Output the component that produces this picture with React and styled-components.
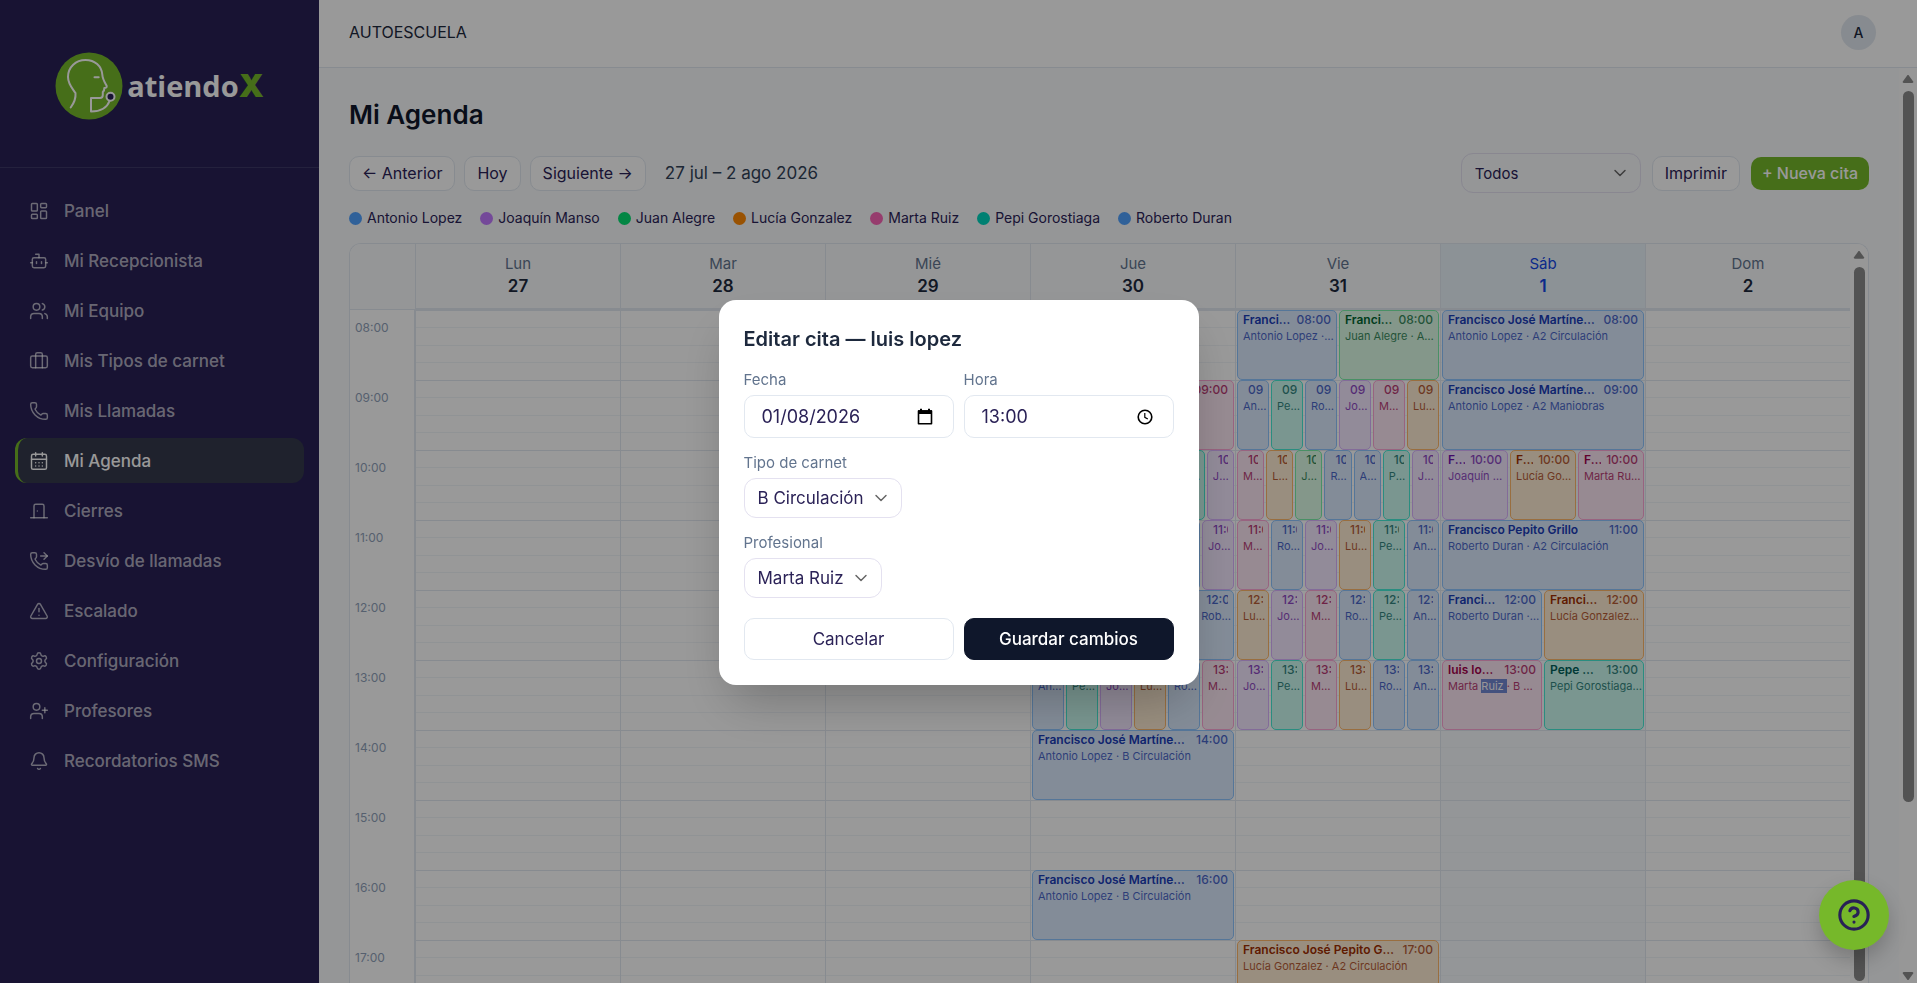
import React, { useState } from "react";
import styled, { createGlobalStyle, css } from "styled-components";
import {
  LayoutDashboard,
  Bot,
  Users,
  Briefcase,
  Phone,
  CalendarDays,
  DoorClosed,
  PhoneForwarded,
  TriangleAlert,
  Settings,
  UserPlus,
  Bell,
  ChevronDown,
} from "lucide-react";

// --- GLOBAL STYLES ---
const GlobalStyle = createGlobalStyle`
  * {
    box-sizing: border-box;
  }

  body {
    margin: 0;
    font-family: 'Inter', 'Liberation Sans', sans-serif;
    font-size: 16px;
    color: #2b2257;
    background-color: #f8fafc;
  }

  button, input, select {
    font-family: inherit;
    color: inherit;
  }
`;

// --- THEME ---
const theme = {
  navy: "#282156",
  green: "#76b82a",
  slate50: "#f8fafc",
  slate100: "#f1f5f9",
  slate200: "#e2e8f0",
  slate400: "#90a1b9",
  slate500: "#62748e",
  slate800: "#1d293d",
  slate900: "#0f172b",
  lilac: "#e4e1f0",
};

const palette = {
  blue: { bg: "#dbeafe", border: "#8ec5ff", text: "#193cb8", dot: "#51a2ff" },
  purple: { bg: "#f3e8ff", border: "#dab2ff", text: "#6e11b0", dot: "#c27aff" },
  green: { bg: "#dcfce7", border: "#7bf1a8", text: "#016630", dot: "#05df72" },
  orange: { bg: "#ffedd4", border: "#ffb86a", text: "#9f2d00", dot: "#ff8904" },
  pink: { bg: "#fce7f3", border: "#fda5d5", text: "#a3004c", dot: "#fb64b6" },
  teal: { bg: "#cbfbf1", border: "#46ecd5", text: "#005f5a", dot: "#00d5be" },
};

// --- DATA ---
const navItems = [
  { label: "Panel", icon: LayoutDashboard },
  { label: "Mi Recepcionista", icon: Bot },
  { label: "Mi Equipo", icon: Users },
  { label: "Mis Tipos de carnet", icon: Briefcase },
  { label: "Mis Llamadas", icon: Phone },
  { label: "Mi Agenda", icon: CalendarDays, active: true },
  { label: "Cierres", icon: DoorClosed },
  { label: "Desvío de llamadas", icon: PhoneForwarded },
  { label: "Escalado", icon: TriangleAlert },
  { label: "Configuración", icon: Settings },
  { label: "Profesores", icon: UserPlus },
  { label: "Recordatorios SMS", icon: Bell },
];

const staff = {
  antonio: { name: "Antonio Lopez", color: "blue" },
  joaquin: { name: "Joaquín Manso", color: "purple" },
  juan: { name: "Juan Alegre", color: "green" },
  lucia: { name: "Lucía Gonzalez", color: "orange" },
  marta: { name: "Marta Ruiz", color: "pink" },
  pepi: { name: "Pepi Gorostiaga", color: "teal" },
  roberto: { name: "Roberto Duran", color: "blue" },
};

const hours = [8, 9, 10, 11, 12, 13, 14, 15, 16, 17];

const longName = "Francisco José Martínez Pérez";

const ev = (who, type = "A2 Circulación", client = longName) => ({ who, type, client });

const days = [
  { name: "Lun", date: "27", events: {} },
  { name: "Mar", date: "28", events: {} },
  { name: "Mié", date: "29", events: {} },
  {
    name: "Jue",
    date: "30",
    events: {
      9: [ev("marta")],
      10: [ev("marta"), ev("lucia"), ev("juan"), ev("roberto"), ev("antonio"), ev("pepi"), ev("joaquin")],
      11: [ev("marta"), ev("lucia"), ev("pepi"), ev("antonio"), ev("roberto"), ev("joaquin")],
      12: [ev("marta"), ev("lucia"), ev("pepi"), ev("antonio"), ev("roberto")],
      13: [ev("antonio"), ev("pepi"), ev("joaquin"), ev("lucia"), ev("roberto"), ev("marta")],
      14: [ev("antonio", "B Circulación")],
      16: [ev("antonio", "B Circulación")],
    },
  },
  {
    name: "Vie",
    date: "31",
    events: {
      8: [ev("antonio"), ev("juan")],
      9: [ev("antonio"), ev("pepi"), ev("roberto"), ev("joaquin"), ev("marta"), ev("lucia")],
      10: [ev("marta"), ev("lucia"), ev("juan"), ev("roberto"), ev("antonio"), ev("pepi"), ev("joaquin")],
      11: [ev("marta"), ev("roberto"), ev("joaquin"), ev("lucia"), ev("pepi"), ev("antonio")],
      12: [ev("lucia"), ev("joaquin"), ev("marta"), ev("roberto"), ev("pepi"), ev("antonio")],
      13: [ev("joaquin"), ev("pepi"), ev("marta"), ev("lucia"), ev("roberto"), ev("antonio")],
      17: [ev("lucia", "A2 Circulación", "Francisco José Pepito Grillo")],
    },
  },
  {
    name: "Sáb",
    date: "1",
    today: true,
    events: {
      8: [ev("antonio")],
      9: [ev("antonio", "A2 Maniobras")],
      10: [ev("joaquin"), ev("lucia"), ev("marta")],
      11: [ev("roberto", "A2 Circulación", "Francisco Pepito Grillo")],
      12: [ev("roberto"), ev("lucia")],
      13: [
        { ...ev("marta", "B Circulación", "luis lopez"), selected: true },
        ev("pepi", "B Circulación", "Pepe Rodriguez"),
      ],
    },
  },
  { name: "Dom", date: "2", events: {} },
];

const formatHour = (h) => `${String(h).padStart(2, "0")}:00`;

// --- Layout ---
const Shell = styled.div`
  display: flex;
  height: 100vh;
  overflow: hidden;
`;

const Main = styled.div`
  flex: 1;
  min-width: 0;
  display: flex;
  flex-direction: column;
`;

const ScrollArea = styled.div`
  flex: 1;
  min-height: 0;
  display: flex;
`;

const Content = styled.main`
  flex: 1;
  min-width: 0;
  padding: 30px 30px 0;
  overflow: hidden;
  display: flex;
  flex-direction: column;
`;

// --- Sidebar ---
const Sidebar = styled.aside`
  width: 319px;
  flex-shrink: 0;
  background-color: ${theme.navy};
`;

const Brand = styled.a`
  height: 168px;
  padding-top: 4px;
  display: flex;
  align-items: center;
  justify-content: center;
  gap: 4px;
  border-bottom: 1px solid rgba(255, 255, 255, 0.1);
  text-decoration: none;
`;

const BrandName = styled.span`
  display: flex;
  align-items: baseline;
  font-family: 'Open Sans', 'Noto Sans', sans-serif;
  font-size: 29px;
  font-weight: 700;
  line-height: 40px;
  color: #ffffff;

  b {
    font-family: 'Inter', sans-serif;
    font-size: 32px;
    font-weight: 900;
    color: ${theme.green};
  }
`;

const Nav = styled.nav`
  display: flex;
  flex-direction: column;
  gap: 5px;
  padding: 20px 15px;
`;

const NavLink = styled.a`
  display: flex;
  align-items: center;
  gap: 15px;
  height: 45px;
  padding: 0 11px;
  border-left: 3px solid transparent;
  border-radius: 12px;
  font-size: 17px;
  font-weight: 500;
  color: rgba(255, 255, 255, 0.65);
  text-decoration: none;

  ${({ $active }) => $active && css`
    background-color: #35394b;
    border-left-color: ${theme.green};
    color: #ffffff;
  `}
`;

// --- Top bar ---
const TopBar = styled.header`
  height: 68px;
  flex-shrink: 0;
  display: flex;
  align-items: center;
  justify-content: space-between;
  padding: 0 41px 3px 30px;
  background-color: #ffffff;
  border-bottom: 1px solid ${theme.slate200};
  color: ${theme.slate800};
`;

const Avatar = styled.div`
  width: 35px;
  height: 35px;
  border-radius: 50%;
  background-color: ${theme.slate200};
  display: flex;
  align-items: center;
  justify-content: center;
  font-size: 14px;
  font-weight: 500;
`;

// --- Toolbar ---
const PageTitle = styled.h1`
  margin: 0 0 21px;
  font-size: 26px;
  line-height: 34px;
  font-weight: 600;
  color: ${theme.slate900};
`;

const Toolbar = styled.div`
  display: flex;
  align-items: center;
  gap: 9px;
  height: 40px;
  flex-shrink: 0;
`;

const ToolButton = styled.button`
  height: 35px;
  padding: 0 12px;
  border: 1px solid ${theme.slate200};
  border-radius: 10px;
  background-color: #ffffff;
  font-size: 16px;
  white-space: nowrap;
`;

const PrimaryButton = styled(ToolButton)`
  height: 33px;
  padding: 0 11px;
  border: none;
  background-color: ${theme.green};
  color: #ffffff;
  font-weight: 500;
`;

const WeekRange = styled.span`
  margin-left: 10px;
  font-size: 17px;
  color: #314158;
`;

const ToolbarEnd = styled.div`
  display: flex;
  align-items: center;
  gap: 11px;
  margin-left: auto;
`;

const SelectWrap = styled.div`
  position: relative;
  width: ${({ $width }) => $width || "fit-content"};

  svg {
    position: absolute;
    right: 11px;
    top: 10px;
    pointer-events: none;
    color: #666666;
  }
`;

const Select = styled.select`
  appearance: none;
  field-sizing: content;
  width: ${({ $full }) => ($full ? "100%" : "auto")};
  height: 40px;
  padding: 0 37px 0 13px;
  border: 1px solid ${theme.lilac};
  border-radius: 12px;
  background-color: transparent;
  font-size: ${({ $full }) => ($full ? "15px" : "17px")};
  display: block;
`;

const Legend = styled.ul`
  display: flex;
  gap: 18px;
  margin: 15px 0;
  padding: 0;
  list-style: none;
`;

const LegendItem = styled.li`
  display: flex;
  align-items: center;
  gap: 5px;
  font-size: 14px;
  line-height: 20px;

  &::before {
    content: '';
    width: 13px;
    height: 13px;
    border-radius: 50%;
    background-color: ${({ $color }) => palette[$color].dot};
  }
`;

// --- Calendar ---
const Calendar = styled.section`
  flex: 1;
  min-height: 0;
  display: flex;
  overflow: hidden;
  border: 1px solid ${theme.slate200};
  border-bottom: none;
  border-radius: 12px 12px 0 0;
  background-color: #ffffff;
`;

const Week = styled.div`
  flex: 1;
  min-width: 0;
  display: grid;
  grid-template-columns: 65px repeat(7, minmax(0, 1fr));
  grid-template-rows: 66px auto;
  overflow: hidden;
`;

const DayHead = styled.div`
  padding-top: 9px;
  border-left: 1px solid ${theme.slate200};
  border-bottom: 2px solid ${theme.slate200};
  background-color: ${({ $today }) => ($today ? "#e9f4fb" : theme.slate50)};
  color: ${({ $today }) => ($today ? "#1447e6" : theme.slate500)};
  text-align: center;
  font-size: 15px;
  line-height: 22px;

  strong {
    display: block;
    font-size: 17px;
    font-weight: 600;
    color: ${({ $today }) => ($today ? "#1447e6" : theme.slate800)};
  }
`;

const Corner = styled.div`
  border-bottom: 1px solid ${theme.slate200};
  background-color: ${theme.slate50};
`;

const HourColumn = styled.div`
  border-right: 1px solid ${theme.slate200};
`;

const HourLabel = styled.div`
  height: 70px;
  padding: 8px 5px;
  font-size: 12px;
  line-height: 20px;
  color: ${theme.slate400};
`;

const DayColumn = styled.div`
  border-left: 1px solid ${theme.slate200};
  background-color: ${({ $today }) => ($today ? "#f7fafe" : "#ffffff")};
`;

const line = (color, y) => `linear-gradient(${color}, ${color}) 0 ${y}px / 100% 1px no-repeat`;

const HourCell = styled.div`
  height: 70px;
  display: flex;
  gap: 2px;
  padding: 0 1px;
  background:
    ${line(theme.slate200, 0)},
    ${line(theme.slate100, 17)},
    ${line(theme.slate100, 35)},
    ${line(theme.slate100, 52)};
`;

const EventCard = styled.article`
  flex: 1;
  min-width: 0;
  padding: 1px 1px 1px 5px;
  border: 1px solid ${({ $color }) => palette[$color].border};
  border-radius: 5px;
  background-color: ${({ $color }) => palette[$color].bg};
  color: ${({ $color }) => palette[$color].text};
  overflow: hidden;
`;

const EventHead = styled.div`
  display: flex;
  justify-content: space-between;
  gap: 5px;
  margin-right: 4px;
  overflow: hidden;
  font-size: 12px;
  line-height: 16px;
`;

const EventClient = styled.strong`
  min-width: 0;
  overflow: hidden;
  text-overflow: ellipsis;
  white-space: nowrap;
  font-weight: 600;
`;

const EventTime = styled.time`
  flex-shrink: 0;
  font-weight: 500;
  opacity: 0.75;
`;

const EventMeta = styled.div`
  overflow: hidden;
  text-overflow: ellipsis;
  white-space: nowrap;
  font-size: 11px;
  line-height: 16px;
  opacity: 0.75;

  mark {
    background-color: #4468c8;
    color: #ffffff;
  }
`;

// --- Scrollbar ---
const ScrollTrack = styled.div`
  width: 18px;
  flex-shrink: 0;
  display: flex;
  flex-direction: column;
  align-items: center;
  justify-content: space-between;
  padding: 6px 0 2px;
  background-color: #fcfcfc;
`;

const ScrollThumb = styled.div`
  width: 11px;
  height: ${({ $size }) => $size};
  margin: 7px 0 auto;
  border-radius: 6px;
  background-color: #8b8b8b;
`;

// --- Modal ---
const Backdrop = styled.div`
  position: fixed;
  inset: 0;
  display: flex;
  align-items: center;
  justify-content: center;
  padding-top: 2px;
  background-color: rgba(0, 0, 0, 0.4);
`;

const Dialog = styled.form`
  width: 100%;
  max-width: 480px;
  padding: 25px;
  border-radius: 17px;
  background-color: #ffffff;
  box-shadow: 0 25px 50px -12px rgba(0, 0, 0, 0.25);
`;

const DialogTitle = styled.h2`
  margin: 0 0 17px;
  font-size: 20px;
  line-height: 28px;
  font-weight: 600;
  color: ${theme.slate800};
`;

const FieldRow = styled.div`
  display: grid;
  grid-template-columns: repeat(2, minmax(0, 1fr));
  gap: 10px;
`;

const Field = styled.div`
  margin-bottom: 15px;
`;

const Label = styled.label`
  display: block;
  margin-bottom: 5px;
  font-size: 15px;
  line-height: 20px;
  color: ${theme.slate500};
`;

const InputBox = styled.div`
  display: flex;
  align-items: center;
  height: 43px;
  padding: 0 20px 0 17px;
  border: 1px solid ${theme.slate200};
  border-radius: 10px;
`;

const TextInput = styled.input`
  flex: 1;
  min-width: 0;
  padding: 0;
  border: none;
  outline: none;
  background: none;
  font-size: 18px;
`;

const PickerButton = styled.button`
  display: flex;
  padding: 0;
  border: none;
  background: none;
  color: #000000;
`;

const Actions = styled(FieldRow)`
  margin-top: 20px;
`;

const DialogButton = styled.button`
  height: 42px;
  border: 1px solid ${({ $primary }) => ($primary ? theme.slate900 : theme.slate200)};
  border-radius: 10px;
  background-color: ${({ $primary }) => ($primary ? theme.slate900 : "#ffffff")};
  color: ${({ $primary }) => ($primary ? "#ffffff" : "inherit")};
  font-size: 17px;
  font-weight: ${({ $primary }) => ($primary ? 500 : 400)};
`;

const HelpButton = styled.button`
  position: fixed;
  right: 28px;
  bottom: 33px;
  width: 70px;
  height: 70px;
  display: flex;
  align-items: center;
  justify-content: center;
  padding: 0;
  border: none;
  border-radius: 50%;
  background-color: ${theme.green};
  color: ${theme.navy};
  box-shadow: 0 10px 20px rgba(0, 0, 0, 0.2);
`;

// --- Drawings ---
const LogoMark = () => (
  <svg width="68" height="68" viewBox="0 0 68 68" fill="none" stroke="#ffffff" strokeWidth="2" strokeLinecap="round" strokeLinejoin="round">
    <circle cx="34" cy="34" r="33.5" fill={theme.green} stroke="none" />
    <path d="M15.700 55.500C19 51 21 46.500 20.500 41C17 36 13 32 13 25C13 15 21 8 30.500 8C40 8 46.500 14 47.300 22.500C47.500 27 49.500 30 51.700 34C52 35.500 51 36 49.300 36C49.500 38 49 39 47.800 40V43C47.800 45 47 46 45 46H36V59.500C45 59.500 52 56 54.500 49" />
    <path d="M39.500 25.200H43.700" />
    <circle cx="55.500" cy="44.700" r="4" fill={theme.navy} />
  </svg>
);

const ScrollArrow = ({ down }) => (
  <svg width="12" height="10" viewBox="0 0 12 10" fill="#8b8b8b">
    {down ? <path d="M1.500 1h9l1 1-5 7h-1l-5-7z" /> : <path d="M5.500 1h1l5 7-1 1h-9l-1-1z" />}
  </svg>
);

const CalendarGlyph = () => (
  <svg width="16" height="18" viewBox="0 0 16 18" fill="none">
    <path d="M1.500 3h13v12.800h-13z" stroke="currentColor" strokeWidth="1.600" strokeLinejoin="round" />
    <path d="M1 2.300h14v3.700H1zM3 .7h2v2H3zM11 .7h2v2h-2z" fill="currentColor" />
  </svg>
);

const ClockGlyph = () => (
  <svg width="16" height="16" viewBox="0 0 16 16" fill="none" stroke="currentColor">
    <circle cx="8" cy="8" r="6.800" strokeWidth="1.600" />
    <path d="M7.800 4v4.300l3 1.800" strokeWidth="1.200" />
  </svg>
);

const HelpGlyph = () => (
  <svg width="34" height="34" viewBox="0 0 24 24" fill="none" stroke="currentColor" strokeWidth="2.200" strokeLinecap="round" strokeLinejoin="round">
    <circle cx="12" cy="12" r="10" />
    <path d="M9.090 9a3 3 0 0 1 5.830 1c0 2-3 3-3 3" />
    <path d="M12 17h.01" />
  </svg>
);

const Scrollbar = ({ size, bottom }) => (
  <ScrollTrack aria-hidden="true">
    <ScrollArrow />
    <ScrollThumb $size={size} />
    {bottom && <ScrollArrow down />}
  </ScrollTrack>
);

const Appointment = ({ hour, event }) => {
  const { name, color } = staff[event.who];
  const [first, ...rest] = name.split(" ");
  return (
    <EventCard $color={color}>
      <EventHead>
        <EventClient>{event.client}</EventClient>
        <EventTime>{formatHour(hour)}</EventTime>
      </EventHead>
      <EventMeta>
        {event.selected ? <>{first} <mark>{rest.join(" ")} </mark></> : `${name} `}
        · {event.type}
      </EventMeta>
    </EventCard>
  );
};

// --- The Main Component ---
const App = () => {
  const [open, setOpen] = useState(true);
  const [filter, setFilter] = useState("Todos");
  const [form, setForm] = useState({
    date: "01/08/2026",
    time: "13:00",
    type: "B Circulación",
    pro: "Marta Ruiz",
  });

  const update = (key) => (e) => setForm({ ...form, [key]: e.target.value });
  const close = () => setOpen(false);
  const names = Object.values(staff);

  return (
    <>
      <GlobalStyle />
      <Shell>
        <Sidebar>
          <Brand href="#">
            <LogoMark />
            <BrandName>atiendo<b>X</b></BrandName>
          </Brand>
          <Nav>
            {navItems.map(({ label, icon: Icon, active }) => (
              <NavLink key={label} href="#" $active={active}>
                <Icon size={20} strokeWidth={1.75} />
                {label}
              </NavLink>
            ))}
          </Nav>
        </Sidebar>

        <Main>
          <TopBar>
            <span>AUTOESCUELA</span>
            <Avatar>A</Avatar>
          </TopBar>

          <ScrollArea>
            <Content>
              <PageTitle>Mi Agenda</PageTitle>

              <Toolbar>
                <ToolButton>← Anterior</ToolButton>
                <ToolButton>Hoy</ToolButton>
                <ToolButton>Siguiente →</ToolButton>
                <WeekRange>27 jul – 2 ago 2026</WeekRange>
                <ToolbarEnd>
                  <SelectWrap $width="180px">
                    <Select $full aria-label="Profesional de la agenda" value={filter} onChange={(e) => setFilter(e.target.value)}>
                      <option>Todos</option>
                      {names.map((s) => <option key={s.name}>{s.name}</option>)}
                    </Select>
                    <ChevronDown size={20} strokeWidth={1.75} />
                  </SelectWrap>
                  <ToolButton>Imprimir</ToolButton>
                  <PrimaryButton>+ Nueva cita</PrimaryButton>
                </ToolbarEnd>
              </Toolbar>

              <Legend>
                {names.map((s) => (
                  <LegendItem key={s.name} $color={s.color}>{s.name}</LegendItem>
                ))}
              </Legend>

              <Calendar>
                <Week>
                  <Corner />
                  {days.map((day) => (
                    <DayHead key={day.name} $today={day.today}>
                      {day.name}
                      <strong>{day.date}</strong>
                    </DayHead>
                  ))}
                  <HourColumn>
                    {hours.map((h) => <HourLabel key={h}>{formatHour(h)}</HourLabel>)}
                  </HourColumn>
                  {days.map((day) => (
                    <DayColumn key={day.name} $today={day.today}>
                      {hours.map((h) => (
                        <HourCell key={h}>
                          {(day.events[h] || []).map((event, i) => (
                            <Appointment key={i} hour={h} event={event} />
                          ))}
                        </HourCell>
                      ))}
                    </DayColumn>
                  ))}
                </Week>
                <Scrollbar size="100%" />
              </Calendar>
            </Content>
            <Scrollbar size="711px" bottom />
          </ScrollArea>
        </Main>
      </Shell>

      {open && (
        <Backdrop>
          <Dialog role="dialog" aria-labelledby="dialog-title" onSubmit={(e) => { e.preventDefault(); close(); }}>
            <DialogTitle id="dialog-title">Editar cita — luis lopez</DialogTitle>
            <FieldRow>
              <Field>
                <Label htmlFor="fecha">Fecha</Label>
                <InputBox>
                  <TextInput id="fecha" value={form.date} onChange={update("date")} />
                  <PickerButton type="button" aria-label="Elegir fecha"><CalendarGlyph /></PickerButton>
                </InputBox>
              </Field>
              <Field>
                <Label htmlFor="hora">Hora</Label>
                <InputBox>
                  <TextInput id="hora" value={form.time} onChange={update("time")} />
                  <PickerButton type="button" aria-label="Elegir hora"><ClockGlyph /></PickerButton>
                </InputBox>
              </Field>
            </FieldRow>
            <Field>
              <Label htmlFor="tipo">Tipo de carnet</Label>
              <SelectWrap>
                <Select id="tipo" value={form.type} onChange={update("type")}>
                  <option>B Circulación</option>
                  <option>A2 Circulación</option>
                  <option>A2 Maniobras</option>
                </Select>
                <ChevronDown size={20} strokeWidth={1.75} />
              </SelectWrap>
            </Field>
            <Field>
              <Label htmlFor="profesional">Profesional</Label>
              <SelectWrap>
                <Select id="profesional" value={form.pro} onChange={update("pro")}>
                  {names.map((s) => <option key={s.name}>{s.name}</option>)}
                </Select>
                <ChevronDown size={20} strokeWidth={1.75} />
              </SelectWrap>
            </Field>
            <Actions>
              <DialogButton type="button" onClick={close}>Cancelar</DialogButton>
              <DialogButton type="submit" $primary>Guardar cambios</DialogButton>
            </Actions>
          </Dialog>
        </Backdrop>
      )}

      <HelpButton aria-label="Ayuda"><HelpGlyph /></HelpButton>
    </>
  );
};

export default App;
